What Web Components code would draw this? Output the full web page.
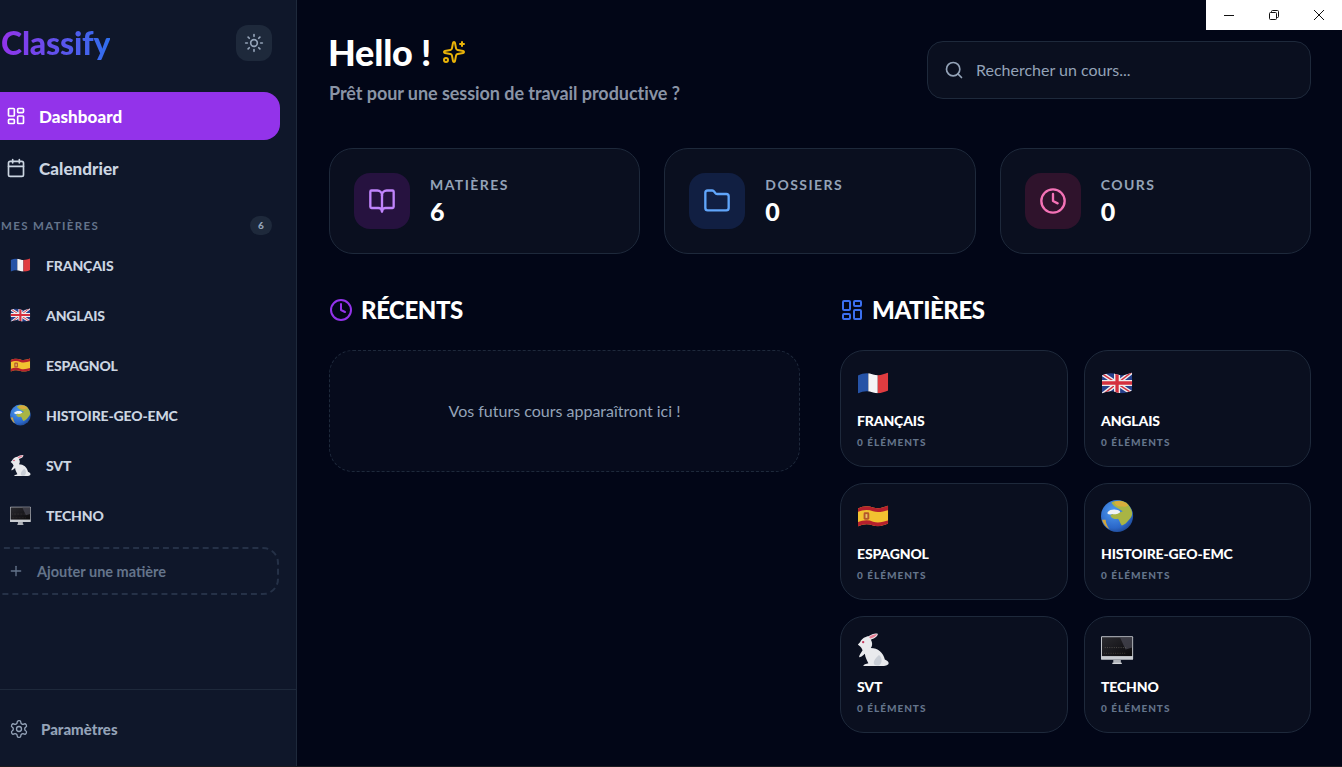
<!DOCTYPE html>
<html lang="fr">
<head>
<meta charset="utf-8">
<title>Classify</title>
<style>
  html, body { margin: 0; height: 100%; background: #020617; overflow: hidden; }
  body { font-family: Lato, "Noto Sans", sans-serif; color: #fff; }
</style>
</head>
<body>
<classify-app></classify-app>

<script>
// icônes (tracés type lucide)
const ICONS = {
  dashboard: '<rect x="3" y="3" width="7" height="9" rx="1"/><rect x="14" y="3" width="7" height="5" rx="1"/><rect x="14" y="12" width="7" height="9" rx="1"/><rect x="3" y="16" width="7" height="5" rx="1"/>',
  calendar: '<path d="M8 2v4"/><path d="M16 2v4"/><rect x="3" y="4" width="18" height="18" rx="2"/><path d="M3 10h18"/>',
  sun: '<circle cx="12" cy="12" r="4"/><path d="M12 2v2"/><path d="M12 20v2"/><path d="m4.93 4.93 1.41 1.41"/><path d="m17.66 17.66 1.41 1.41"/><path d="M2 12h2"/><path d="M20 12h2"/><path d="m6.34 17.66-1.41 1.41"/><path d="m19.07 4.93-1.41 1.41"/>',
  book: '<path d="M12 7v14"/><path d="M3 18a1 1 0 0 1-1-1V4a1 1 0 0 1 1-1h5a4 4 0 0 1 4 4 4 4 0 0 1 4-4h5a1 1 0 0 1 1 1v13a1 1 0 0 1-1 1h-6a3 3 0 0 0-3 3 3 3 0 0 0-3-3z"/>',
  folder: '<path d="M20 20a2 2 0 0 0 2-2V8a2 2 0 0 0-2-2h-7.9a2 2 0 0 1-1.69-.9L9.6 3.9A2 2 0 0 0 7.93 3H4a2 2 0 0 0-2 2v13a2 2 0 0 0 2 2Z"/>',
  clock: '<circle cx="12" cy="12" r="10"/><path d="M12 6v6l4 2"/>',
  search: '<circle cx="11" cy="11" r="8"/><path d="m21 21-4.3-4.3"/>',
  plus: '<path d="M5 12h14"/><path d="M12 5v14"/>',
  settings: '<path d="M12.22 2h-.44a2 2 0 0 0-2 2v.18a2 2 0 0 1-1 1.73l-.43.25a2 2 0 0 1-2 0l-.15-.08a2 2 0 0 0-2.73.73l-.22.38a2 2 0 0 0 .73 2.73l.15.1a2 2 0 0 1 1 1.72v.51a2 2 0 0 1-1 1.74l-.15.09a2 2 0 0 0-.73 2.73l.22.38a2 2 0 0 0 2.73.73l.15-.08a2 2 0 0 1 2 0l.43.25a2 2 0 0 1 1 1.73V20a2 2 0 0 0 2 2h.44a2 2 0 0 0 2-2v-.18a2 2 0 0 1 1-1.73l.43-.25a2 2 0 0 1 2 0l.15.08a2 2 0 0 0 2.73-.73l.22-.39a2 2 0 0 0-.73-2.73l-.15-.08a2 2 0 0 1-1-1.74v-.5a2 2 0 0 1 1-1.74l.15-.09a2 2 0 0 0 .73-2.73l-.22-.38a2 2 0 0 0-2.73-.73l-.15.08a2 2 0 0 1-2 0l-.43-.25a2 2 0 0 1-1-1.73V4a2 2 0 0 0-2-2z"/><circle cx="12" cy="12" r="3"/>',
  sparkles: '<path d="M11.017 2.814a1 1 0 0 1 1.966 0l1.051 5.558a2 2 0 0 0 1.594 1.594l5.558 1.051a1 1 0 0 1 0 1.966l-5.558 1.051a2 2 0 0 0-1.594 1.594l-1.051 5.558a1 1 0 0 1-1.966 0l-1.051-5.558a2 2 0 0 0-1.594-1.594l-5.558-1.051a1 1 0 0 1 0-1.966l5.558-1.051a2 2 0 0 0 1.594-1.594z"/><path d="M20 2v4"/><path d="M22 4h-4"/><circle cx="4" cy="20" r="2"/>'
};

class UiIcon extends HTMLElement {
  connectedCallback() {
    const size = this.getAttribute('size') || 24;
    const sw = this.getAttribute('stroke') || 2;
    this.attachShadow({ mode: 'open' }).innerHTML = `
      <style>:host { display: inline-flex; flex: none; width: ${size}px; height: ${size}px; } svg { display: block; }</style>
      <svg width="${size}" height="${size}" viewBox="0 0 24 24" fill="none" stroke="currentColor" stroke-width="${sw}" stroke-linecap="round" stroke-linejoin="round">${ICONS[this.getAttribute('name')]}</svg>`;
  }
}

// emojis dessinés, viewBox 36x36, calés à gauche comme le glyphe d'origine
const WAVE = 'M1 10 C7 7 12 7 17 9 C23 11 28 9 33 7 L33 26 C28 28 23 30 17 28 C12 26 7 26 1 29 Z';
const flag = inner => `<defs><clipPath id="f"><path d="${WAVE}"/></clipPath></defs><g clip-path="url(#f)">${inner}</g>`;
const EMOJI = {
  fr: flag('<rect width="12" height="36" fill="#2653a6"/><rect x="12" width="10" height="36" fill="#f4f4f6"/><rect x="22" width="12" height="36" fill="#e03c40"/>'),
  gb: flag('<rect width="36" height="36" fill="#27408b"/><path d="M1 8 L33 29 M33 6 L1 31" stroke="#eee" stroke-width="4.5"/><path d="M1 8 L33 29 M33 6 L1 31" stroke="#d5303e" stroke-width="1.5"/><path d="M17 0V36 M0 18H36" stroke="#eee" stroke-width="6.5"/><path d="M17 0V36 M0 18H36" stroke="#d5303e" stroke-width="3.5"/>'),
  es: flag('<rect width="36" height="36" fill="#f2c230"/><path d="M0 14 C7 11 12 11 17 13 C23 15 28 13 36 11 V0 H0Z" fill="#b5202c"/><path d="M0 25 C7 22 12 22 17 24 C23 26 28 24 36 22 V36 H0Z" fill="#b5202c"/><rect x="7" y="14" width="6" height="8" rx="1.5" fill="#b4552b"/><rect x="9" y="16" width="2" height="4" fill="#e9c46a"/>'),
  globe: '<defs><radialGradient id="g" cx=".4" cy=".35" r=".75"><stop offset="0" stop-color="#4f9bf0"/><stop offset=".7" stop-color="#2a66c8"/><stop offset="1" stop-color="#1c3f80"/></radialGradient></defs><circle cx="17" cy="18" r="17" fill="url(#g)"/><path d="M11 4 C16 1 25 1 29 6 C33 11 34 16 32 19 C29 23 26 27 22 28 C20 26 20 23 18 21 C14 22 10 20 10 17 C13 15 19 15 23 13 C19 10 14 9 11 4Z" fill="#a9b544"/><path d="M14 3 C19 1 26 2 29 7 C26 9 23 8 20 8 C17 8 15 6 14 3Z" fill="#d9ad3c"/><path d="M7 14 C10 10 18 11 20 13 C21 15 16 17 12 16 C9 17 6 16 7 14Z" fill="#f1f3f6"/><path d="M1 22 C3 27 5 30 9 32 C6 28 5 25 5 22Z" fill="#d3a63c"/>',
  rabbit: '<g transform="translate(-6.5 -3) scale(1.24)"><path d="M8 11 C9 8 13 6 15 6 C18 4 21 3 23 4 C23 6 21 8 17 9 C19 12 18 15 17 16 C23 16 28 20 29 26 C31 27 33 28 32 30 C30 32 28 31 26 32 L12 33 C10 33 10 31 12 30 L15 29 C14 27 12 24 12 21 C10 23 8 24 7 24 C7 22 9 20 10 18 C9 15 7 14 6 13 Z" fill="#e9eaed"/><path d="M24 22 C27 24 27 29 24 31 C18 32 18 27 24 22Z" fill="#c9ced6"/><path d="M15.5 6.6 C18 5 20.5 4 22.5 4.5 C21 6.5 18.5 7.5 16.5 8Z" fill="#e67f95"/><circle cx="10.5" cy="11" r="1" fill="#c73c5e"/></g>',
  computer: '<defs><linearGradient id="s" x1="0" y1="0" x2="1" y2="1"><stop offset="0" stop-color="#2b2b30"/><stop offset=".6" stop-color="#17161a"/><stop offset="1" stop-color="#0c0b0c"/></linearGradient></defs><g transform="translate(0 1.5)"><rect x="0" y="3" width="34" height="25" rx="1" fill="#c9ccd1"/><rect x="1" y="4" width="32" height="20" fill="url(#s)"/><path d="M20 4 H33 V15 L26 17Z" fill="#4a4a55" opacity=".7"/><path d="M4 15 H28" stroke="#6d6a62" stroke-dasharray="1 1.4" stroke-width=".7"/><path d="M3 21 H26" stroke="#5a5346" stroke-dasharray="1 1.4" stroke-width=".7"/><rect x="13" y="28" width="8" height="4" fill="#aeb1b7"/><rect x="12" y="31" width="10" height="1.4" fill="#d3d5d9"/></g>'
};

class SubjectEmoji extends HTMLElement {
  connectedCallback() {
    const size = this.getAttribute('size') || 22;
    this.attachShadow({ mode: 'open' }).innerHTML = `
      <style>:host { display: inline-flex; flex: none; width: ${size}px; height: ${size}px; } svg { display: block; }</style>
      <svg width="${size}" height="${size}" viewBox="0 0 36 36">${EMOJI[this.getAttribute('kind')]}</svg>`;
  }
}

class NavItem extends HTMLElement {
  connectedCallback() {
    const active = this.hasAttribute('active');
    this.attachShadow({ mode: 'open' }).innerHTML = `
      <style>
        :host { display: flex; align-items: center; gap: 13px; height: 48px; margin-left: -16px; padding-left: 22px;
          border-radius: 0 16px 16px 0; font-size: 17px; font-weight: 900; letter-spacing: .05px;
          color: ${active ? '#fff' : '#cbd5e1'}; background: ${active ? '#9333ea' : 'transparent'}; }
      </style>
      <ui-icon name="${this.getAttribute('icon')}" size="20"></ui-icon><slot></slot>`;
  }
}

class SubjectRow extends HTMLElement {
  connectedCallback() {
    this.attachShadow({ mode: 'open' }).innerHTML = `
      <style>
        :host { display: flex; align-items: center; gap: 14px; height: 50px; padding-left: 10px;
          font-size: 14px; font-weight: 900; color: #cbd5e1; letter-spacing: -.15px; }
      </style>
      <subject-emoji kind="${this.getAttribute('kind')}"></subject-emoji><slot></slot>`;
  }
}

class AppSidebar extends HTMLElement {
  connectedCallback() {
    this.attachShadow({ mode: 'open' }).innerHTML = `
      <style>
        :host { display: flex; flex-direction: column; flex: none; box-sizing: border-box; width: 297px; height: 767px;
          background: #0f172a; border-right: 1px solid #1e293b; overflow: hidden; }
        .top { display: flex; align-items: center; justify-content: space-between; height: 36px; margin: 25px 24px 31px 1px; }
        .logo { font-size: 32px; font-weight: 900; line-height: 36px; letter-spacing: -.2px;
          background: linear-gradient(90deg, #9333ea, #2f6fee); -webkit-background-clip: text; background-clip: text; color: transparent; }
        .theme { display: flex; align-items: center; justify-content: center; width: 36px; height: 36px; border-radius: 12px; background: #1e293b; color: #94a3b8; }
        nav { display: flex; flex-direction: column; gap: 4px; margin-right: 16px; }
        .label { display: flex; align-items: center; justify-content: space-between; margin: 24px 24px 5px 1px; height: 19px;
          font-size: 11.5px; font-weight: 700; letter-spacing: 1.35px; color: #64748b; }
        .badge { width: 22px; height: 19px; line-height: 19px; text-align: center; border-radius: 10px; background: #1e293b; color: #94a3b8; font-size: 10px; letter-spacing: 0; font-weight: 900; }
        .add { display: flex; align-items: center; gap: 13px; box-sizing: border-box; height: 48px; margin: 7px 17px 0 -16px; padding-left: 24px;
          border: 2px dashed #253147; border-left: 0; border-radius: 0 16px 16px 0;
          font-size: 14.5px; font-weight: 700; color: #64748b; }
        .foot { display: flex; align-items: center; gap: 12px; margin-top: auto; height: 77px; padding-left: 9px; border-top: 1px solid #1e293b;
          font-size: 15px; font-weight: 900; color: #94a3b8; }
      </style>
      <div class="top">
        <div class="logo">Classify</div>
        <div class="theme"><ui-icon name="sun" size="20"></ui-icon></div>
      </div>
      <nav>
        <nav-item icon="dashboard" active>Dashboard</nav-item>
        <nav-item icon="calendar">Calendrier</nav-item>
      </nav>
      <div class="label"><span>MES MATIÈRES</span><span class="badge">6</span></div>
      <subject-row kind="fr">FRANÇAIS</subject-row>
      <subject-row kind="gb">ANGLAIS</subject-row>
      <subject-row kind="es">ESPAGNOL</subject-row>
      <subject-row kind="globe">HISTOIRE-GEO-EMC</subject-row>
      <subject-row kind="rabbit">SVT</subject-row>
      <subject-row kind="computer">TECHNO</subject-row>
      <div class="add"><ui-icon name="plus" size="16"></ui-icon><span>Ajouter une matière</span></div>
      <div class="foot"><ui-icon name="settings" size="20" stroke="1.6"></ui-icon><span>Paramètres</span></div>`;
  }
}

class SearchBox extends HTMLElement {
  connectedCallback() {
    this.attachShadow({ mode: 'open' }).innerHTML = `
      <style>
        :host { display: flex; align-items: center; gap: 12px; box-sizing: border-box; width: 384px; height: 58px; padding: 0 0 1px 16px;
          background: #0a0f1f; border: 1px solid #1e293b; border-radius: 16px; color: #94a3b8; font-size: 16px; }
      </style>
      <ui-icon name="search" size="20"></ui-icon><slot></slot>`;
  }
}

class StatCard extends HTMLElement {
  connectedCallback() {
    this.attachShadow({ mode: 'open' }).innerHTML = `
      <style>
        :host { display: flex; align-items: center; gap: 20px; box-sizing: border-box; height: 106px; padding-left: 24px;
          background: #0a0f1f; border: 1px solid #1e293b; border-radius: 24px; }
        .ic { display: flex; align-items: center; justify-content: center; width: 56px; height: 56px; border-radius: 16px;
          background: ${this.getAttribute('tint')}; color: ${this.getAttribute('color')}; }
        .lab { font-size: 14px; font-weight: 700; letter-spacing: 1.45px; color: #94a3b8; line-height: 18px; }
        .val { font-size: 25px; font-weight: 900; color: #fff; line-height: 32px; padding-top: 1px; margin-bottom: -1px; }
      </style>
      <div class="ic"><ui-icon name="${this.getAttribute('icon')}" size="28"></ui-icon></div>
      <div><div class="lab">${this.getAttribute('label')}</div><div class="val">${this.getAttribute('value')}</div></div>`;
  }
}

class SectionTitle extends HTMLElement {
  connectedCallback() {
    this.attachShadow({ mode: 'open' }).innerHTML = `
      <style>
        :host { display: flex; align-items: center; gap: 8px; height: 28px; font-size: 24px; font-weight: 900; color: #fff; letter-spacing: -.45px; }
        ui-icon { color: ${this.getAttribute('color')}; }
        span { margin-top: -1px; }
      </style>
      <ui-icon name="${this.getAttribute('icon')}" size="24"></ui-icon><span><slot></slot></span>`;
  }
}

class SubjectCard extends HTMLElement {
  connectedCallback() {
    this.attachShadow({ mode: 'open' }).innerHTML = `
      <style>
        :host { display: block; box-sizing: border-box; height: 117px; padding: 15px 16px 0; background: #0a0f1f; border: 1px solid #1e293b; border-radius: 24px; }
        .name { margin-top: 8px; font-size: 14px; font-weight: 900; line-height: 20px; color: #fff; letter-spacing: -.15px; }
        .count { margin-top: 4px; font-size: 10px; font-weight: 900; line-height: 14px; letter-spacing: 1px; color: #64748b; }
      </style>
      <subject-emoji kind="${this.getAttribute('kind')}" size="34"></subject-emoji>
      <div class="name"><slot></slot></div>
      <div class="count">0 ÉLÉMENTS</div>`;
  }
}

class WindowControls extends HTMLElement {
  connectedCallback() {
    this.attachShadow({ mode: 'open' }).innerHTML = `
      <style>
        :host { position: absolute; top: 0; right: 0; display: flex; width: 136px; height: 30px; background: #fff; color: #111; }
        div { flex: 1; display: flex; align-items: center; justify-content: center; }
        svg { display: block; }
      </style>
      <div><svg width="10" height="10" viewBox="0 0 10 10" stroke="currentColor" fill="none"><path d="M0 5.5h10"/></svg></div>
      <div><svg width="10" height="10" viewBox="0 0 10 10" stroke="currentColor" fill="none"><rect x=".5" y="2.5" width="7" height="7" rx="1"/><path d="M2.5 2.5V1.5a1 1 0 0 1 1-1h5a1 1 0 0 1 1 1v5a1 1 0 0 1-1 1h-1"/></svg></div>
      <div><svg width="10" height="10" viewBox="0 0 10 10" stroke="currentColor" fill="none"><path d="M0 0l10 10M10 0L0 10"/></svg></div>`;
  }
}

class ClassifyApp extends HTMLElement {
  connectedCallback() {
    this.attachShadow({ mode: 'open' }).innerHTML = `
      <style>
        :host { display: flex; width: 1342px; height: 767px; background: #020617; overflow: hidden; position: relative; }
        :host::after { content: ""; position: absolute; left: 0; right: 0; bottom: 0; height: 1px; background: #1c1c1f; }
        main { flex: 1; min-width: 0; box-sizing: border-box; padding: 32px 31px 0 32px; }
        header { display: flex; justify-content: space-between; height: 116px; }
        h1 { display: flex; align-items: center; gap: 11px; margin: 0 0 0 -1px; height: 40px; font-size: 36px; font-weight: 900; color: #fff; line-height: 40px; letter-spacing: -.2px; }
        h1 ui-icon { color: #eab308; }
        .sub { margin-top: 9px; font-size: 18px; font-weight: 700; color: #8a94a6; line-height: 24px; letter-spacing: -.06px; }
        search-box { margin-top: 9px; }
        .stats { display: grid; grid-template-columns: repeat(3, 1fr); gap: 24px; }
        .cols { display: grid; grid-template-columns: 1fr 1fr; gap: 40px; margin-top: 42px; }
        .empty { display: flex; align-items: center; justify-content: center; box-sizing: border-box; height: 122px; margin-top: 26px; padding-bottom: 1px;
          border: 1px dashed #1e293b; border-radius: 24px; background: #060b1c; color: #94a3b8; font-size: 16px; }
        .grid { display: grid; grid-template-columns: 228px 227px; gap: 16px; margin-top: 26px; }
      </style>
      <app-sidebar></app-sidebar>
      <main>
        <header>
          <div>
            <h1>Hello !<ui-icon name="sparkles" size="24"></ui-icon></h1>
            <div class="sub">Prêt pour une session de travail productive ?</div>
          </div>
          <search-box>Rechercher un cours...</search-box>
        </header>
        <div class="stats">
          <stat-card icon="book" label="MATIÈRES" value="6" tint="#26123f" color="#c084fc"></stat-card>
          <stat-card icon="folder" label="DOSSIERS" value="0" tint="#111f42" color="#60a5fa"></stat-card>
          <stat-card icon="clock" label="COURS" value="0" tint="#2f132c" color="#f472b6"></stat-card>
        </div>
        <div class="cols">
          <section>
            <section-title icon="clock" color="#9333ea">RÉCENTS</section-title>
            <div class="empty">Vos futurs cours apparaîtront ici !</div>
          </section>
          <section>
            <section-title icon="dashboard" color="#3b6ff0">MATIÈRES</section-title>
            <div class="grid">
              <subject-card kind="fr">FRANÇAIS</subject-card>
              <subject-card kind="gb">ANGLAIS</subject-card>
              <subject-card kind="es">ESPAGNOL</subject-card>
              <subject-card kind="globe">HISTOIRE-GEO-EMC</subject-card>
              <subject-card kind="rabbit">SVT</subject-card>
              <subject-card kind="computer">TECHNO</subject-card>
            </div>
          </section>
        </div>
      </main>
      <window-controls></window-controls>`;
  }
}

customElements.define('ui-icon', UiIcon);
customElements.define('subject-emoji', SubjectEmoji);
customElements.define('nav-item', NavItem);
customElements.define('subject-row', SubjectRow);
customElements.define('app-sidebar', AppSidebar);
customElements.define('search-box', SearchBox);
customElements.define('stat-card', StatCard);
customElements.define('section-title', SectionTitle);
customElements.define('subject-card', SubjectCard);
customElements.define('window-controls', WindowControls);
customElements.define('classify-app', ClassifyApp);
</script>
</body>
</html>
